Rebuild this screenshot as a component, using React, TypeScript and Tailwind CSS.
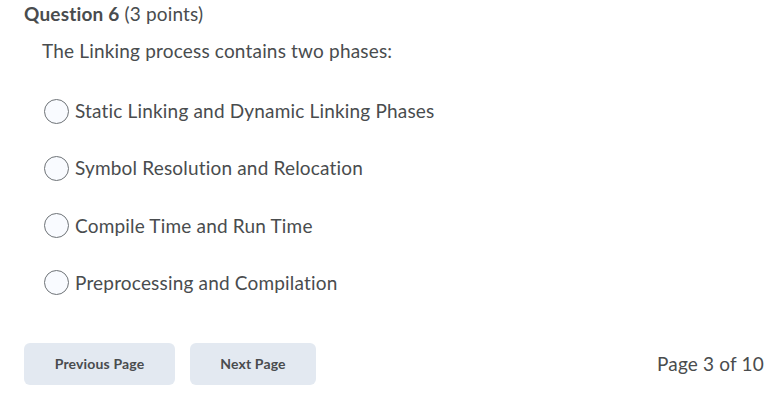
import React, { useState } from 'react';

const options = [
  'Static Linking and Dynamic Linking Phases',
  'Symbol Resolution and Relocation',
  'Compile Time and Run Time',
  'Preprocessing and Compilation',
];

const App: React.FC = () => {
  const [selected, setSelected] = useState<number | null>(null);

  return (
    <div
      className="w-[784px] h-[403px] bg-white text-[#494c4e] pl-6 pr-5 overflow-hidden tracking-[0.18px]"
      style={{ fontFamily: 'Lato, "Noto Sans", sans-serif' }}
    >
      {/* Question header */}
      <h2 className="text-[19px] leading-[27px]">
        <span className="font-bold">Question 6</span> (3 points)
      </h2>

      <p className="mt-[10px] pl-[18px] text-[19px] leading-[28px]">
        The Linking process contains two phases:
      </p>

      {/* Choices */}
      <div className="mt-8 pl-5 flex flex-col gap-[29.3px]">
        {options.map((opt, i) => (
          <label key={opt} className="flex items-center gap-[6px] h-[28px] cursor-pointer">
            <input
              type="radio"
              name="q6"
              checked={selected === i}
              onChange={() => setSelected(i)}
              className="appearance-none w-[25px] h-[25px] rounded-full border border-[#6e7377] bg-[#f9fbff] checked:border-[7px] checked:border-[#006fbf] shrink-0"
            />
            <span className="text-[19px] leading-[28px]">{opt}</span>
          </label>
        ))}
      </div>

      {/* Footer */}
      <div className="mt-[46px] flex items-center justify-between">
        <div className="flex gap-[15px]">
          <button className="h-[42px] w-[151px] rounded-md bg-[#e3e9f1] text-[14px] font-bold text-[#494c4e] tracking-[0.15px]">
            Previous Page
          </button>
          <button className="h-[42px] w-[126px] rounded-md bg-[#e3e9f1] text-[14px] font-bold text-[#494c4e] tracking-[0.15px]">
            Next Page
          </button>
        </div>
        <span className="text-[19px] leading-[28px]">Page 3 of 10</span>
      </div>
    </div>
  );
};

export default App;
